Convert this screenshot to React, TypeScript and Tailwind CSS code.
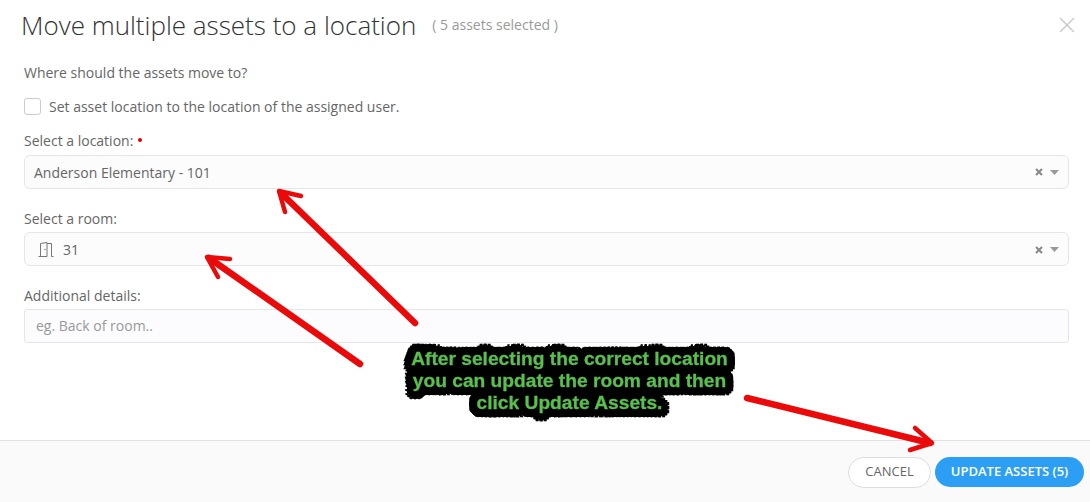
import { X } from 'lucide-react';

const Door = () => (
    <svg width="16" height="15" viewBox="0 0 16 15" fill="none" stroke="#777" strokeWidth="1" className="shrink-0">
        <path d="M0.5 14.5h8.5M2.5 14.5V1.5L9 0.5V14.5M9 1.5H13.5V14.5H15.5" />
        <circle cx="7" cy="7.5" r="0.7" fill="#777" stroke="none" />
    </svg>
);

const SelectControls = () => (
    <div className="ml-auto flex items-center gap-[7px]">
        <svg width="8" height="8" viewBox="0 0 8 8" stroke="#888" strokeWidth="2">
            <path d="M1 1l6 6M7 1l-6 6" />
        </svg>
        <svg width="9" height="5" viewBox="0 0 9 5" fill="#999">
            <path d="M0 0h9L4.5 5z" />
        </svg>
    </div>
);

function Arrow({ line, head }: { line: string; head: string }) {
    return (
        <g fill="none" stroke="#ea0a0a" strokeLinecap="round" strokeLinejoin="round">
            <path d={line} strokeWidth="6.5" />
            <path d={head} strokeWidth="4.5" />
        </g>
    );
}

export default function App() {
    return (
        <div className="relative w-[1090px] h-[502px] bg-white overflow-hidden flex flex-col font-['Open_Sans',sans-serif] text-[#666]">
            {/* Header */}
            <div className="flex items-center h-[50px] pl-[21px] pr-[10px] shrink-0">
                <h1 className="text-[26px] font-light text-[#333] leading-none">Move multiple assets to a location</h1>
                <span className="ml-[16px] mb-[2px] text-[14px] text-[#999]">( 5 assets selected )</span>
                <X className="ml-auto w-[26px] h-[26px] text-[#ccc]" strokeWidth={1.4} />
            </div>

            {/* Form */}
            <div className="flex-1 px-[24px] pr-[21px] text-[14px]">
                <p className="mt-[13px] leading-[20px]">Where should the assets move to?</p>
                <label className="flex items-center mt-[13px] h-[20px]">
                    <span className="w-[17px] h-[17px] rounded-[3px] border border-[#ccc] bg-white" />
                    <span className="ml-[8px]">Set asset location to the location of the assigned user.</span>
                </label>

                <div className="mt-[15px] leading-[20px] flex items-center">
                    Select a location:
                    <span className="ml-[5px] mb-[3px] w-[4px] h-[4px] rounded-full bg-[#e00000]" />
                </div>
                <div className="mt-[4px] h-[34px] flex items-center px-[9px] rounded-[6px] border border-[#e6e6e6] bg-[#fcfcfc]">
                    <span>Anderson Elementary - 101</span>
                    <SelectControls />
                </div>

                <div className="mt-[20px] leading-[20px]">Select a room:</div>
                <div className="mt-[3px] h-[34px] flex items-center pl-[9px] pr-[9px] pt-[1px] rounded-[6px] border border-[#e6e6e6] bg-[#fcfcfc]">
                    <span className="ml-[4px]"><Door /></span>
                    <span className="ml-[9px]">31</span>
                    <SelectControls />
                </div>

                <div className="mt-[20px] leading-[20px]">Additional details:</div>
                <div className="mt-[3px] h-[34px] flex items-center px-[11px] pb-[1px] rounded-[3px] border border-[#e6e6e6] bg-[#fcfcfe] text-[#999]">
                    eg. Back of room..
                </div>
            </div>

            {/* Footer */}
            <div className="h-[62px] shrink-0 border-t border-[#e2e2e2] bg-[#fafafa] flex items-center justify-end gap-[4px] pr-[6px] pt-[1px]">
                <button className="h-[31px] w-[83px] rounded-full border border-[#ddd] bg-white text-[13px] text-[#666]">CANCEL</button>
                <button className="h-[30px] w-[149px] rounded-full bg-[#2c9ff5] text-[13px] font-semibold text-white">UPDATE ASSETS (5)</button>
            </div>

            {/* Annotations */}
            <svg className="absolute inset-0" width="1090" height="502" viewBox="0 0 1090 502">
                <Arrow line="M415 323L281 193" head="M285 212L279 191L301 196" />
                <Arrow line="M360 364L209 258" head="M218 277L207 257L230 259" />
                <Arrow line="M747 398L930 443" head="M915 428L932 443L910 450" />
            </svg>
            <div className="absolute left-[403px] top-[348px] w-[333px] flex flex-col items-center whitespace-nowrap font-['Liberation_Sans',sans-serif] font-bold text-[19.2px] leading-[22px] text-[#58c04c] [-webkit-text-stroke:0.3px_#58c04c] [filter:drop-shadow(4px_0_0_#000)_drop-shadow(-4px_0_0_#000)_drop-shadow(0_4px_0_#000)_drop-shadow(0_-4px_0_#000)_drop-shadow(2px_2px_0_#000)_drop-shadow(-2px_-2px_0_#000)_drop-shadow(2px_-2px_0_#000)_drop-shadow(-2px_2px_0_#000)]">
                <span>After selecting the correct location</span>
                <span>you can update the room and then</span>
                <span>click Update Assets.</span>
            </div>
        </div>
    );
}
